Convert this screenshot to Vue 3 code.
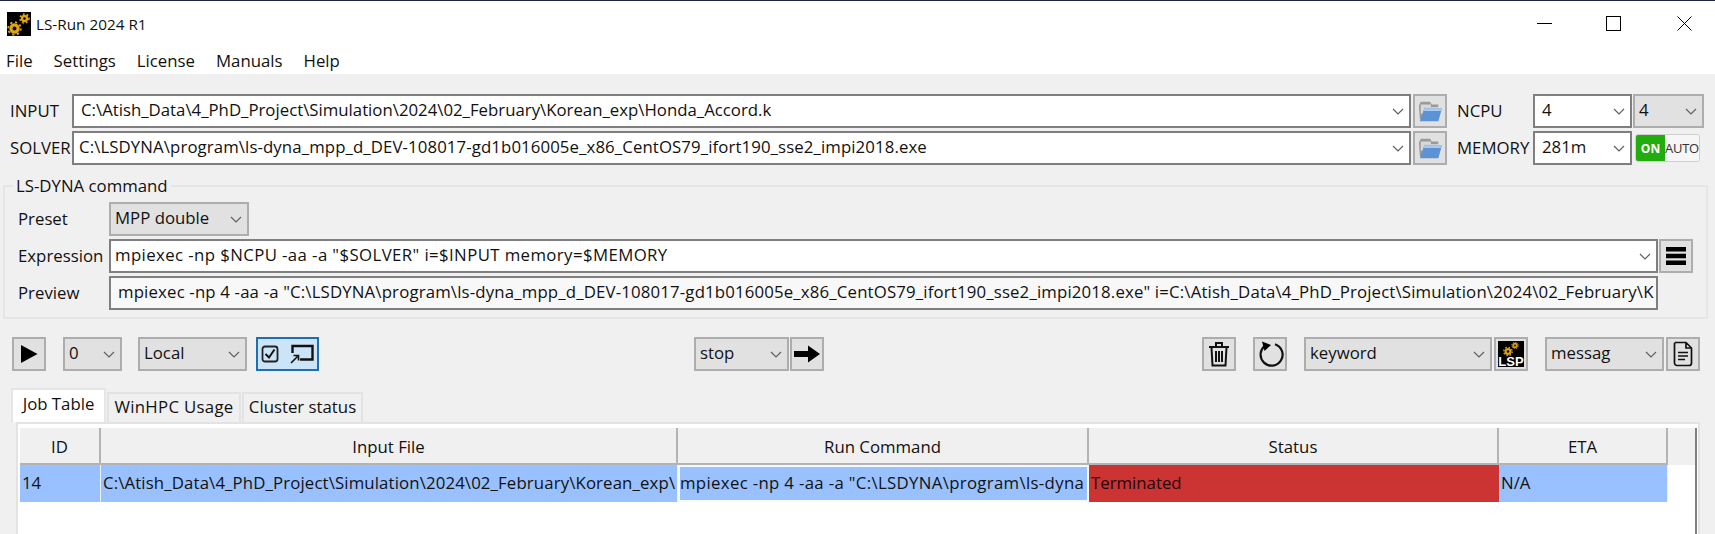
<script setup>
const chev = 'M1 1 L6 6 L11 1'
const cols = [
  { t: 'ID', w: 81 },
  { t: 'Input File', w: 577 },
  { t: 'Run Command', w: 411 },
  { t: 'Status', w: 410 },
  { t: 'ETA', w: 169 }
]
</script>

<template>
  <div class="win">
    <header class="titlebar">
      <svg class="appicon" viewBox="0 0 24 24">
        <rect width="24" height="24" fill="#000" />
        <g fill="none" stroke="#e2a512">
          <circle cx="7.5" cy="16.5" r="3.6" stroke-width="3.2" />
          <circle cx="7.5" cy="16.5" r="6.3" stroke-width="1.8" stroke-dasharray="2.2 2.7" />
          <circle cx="17.5" cy="6.5" r="2.5" stroke-width="2.4" />
          <circle cx="17.5" cy="6.5" r="4.5" stroke-width="1.5" stroke-dasharray="1.8 2" />
        </g>
      </svg>
      <span class="apptitle">LS-Run 2024 R1</span>
      <div class="winbtns">
        <svg viewBox="0 0 15 15"><path d="M0 7.5H15" stroke="#000" fill="none" /></svg>
        <svg viewBox="0 0 15 15"><rect x="0.5" y="0.5" width="14" height="14" stroke="#000" fill="none" /></svg>
        <svg class="closex" viewBox="0 0 15 15"><path d="M0.5 0.5L14.5 14.5M14.5 0.5L0.5 14.5" stroke="#000" fill="none" /></svg>
      </div>
    </header>
    <nav class="menu">
      <span>File</span><span>Settings</span><span>License</span><span>Manuals</span><span>Help</span>
    </nav>

    <main class="body">
      <section class="toprows">
        <div class="row">
          <label class="toplabel">INPUT</label>
          <div class="combo white main"><span class="val">C:\Atish_Data\4_PhD_Project\Simulation\2024\02_February\Korean_exp\Honda_Accord.k</span><svg class="chev" viewBox="0 0 12 7"><path :d="chev" /></svg></div>
          <button class="btn folder"><svg viewBox="0 0 28 26"><path d="M2 7 L4 3 H14 L16 6 H23 V9 H8 L5 22 H3 Z" fill="#9a9a9a" /><path d="M4 6 H15 V9 H8 L6 16 H4Z" fill="#d8d8d8" /><path d="M8 10 H27 L23 24 H3 Z" fill="#5b93d6" /><path d="M8 10 H27 L26 13 H7 Z" fill="#a9c9ee" /></svg></button>
          <label class="rlabel">NCPU</label>
          <div class="combo white ncpu"><span class="val">4</span><svg class="chev" viewBox="0 0 12 7"><path :d="chev" /></svg></div>
          <div class="combo grey ncpu2"><span class="val">4</span><svg class="chev" viewBox="0 0 12 7"><path :d="chev" /></svg></div>
        </div>
        <div class="row">
          <label class="toplabel">SOLVER</label>
          <div class="combo white main tight"><span class="val">C:\LSDYNA\program\ls-dyna_mpp_d_DEV-108017-gd1b016005e_x86_CentOS79_ifort190_sse2_impi2018.exe</span><svg class="chev" viewBox="0 0 12 7"><path :d="chev" /></svg></div>
          <button class="btn folder"><svg viewBox="0 0 28 26"><path d="M2 7 L4 3 H14 L16 6 H23 V9 H8 L5 22 H3 Z" fill="#9a9a9a" /><path d="M4 6 H15 V9 H8 L6 16 H4Z" fill="#d8d8d8" /><path d="M8 10 H27 L23 24 H3 Z" fill="#5b93d6" /><path d="M8 10 H27 L26 13 H7 Z" fill="#a9c9ee" /></svg></button>
          <label class="rlabel">MEMORY</label>
          <div class="combo white ncpu"><span class="val">281m</span><svg class="chev" viewBox="0 0 12 7"><path :d="chev" /></svg></div>
          <div class="toggle"><span class="on">ON</span><span class="auto">AUTO</span></div>
        </div>
      </section>

      <fieldset class="group">
        <legend>LS-DYNA command</legend>
        <div class="grow">
          <label>Preset</label>
          <div class="combo grey preset"><span class="val">MPP double</span><svg class="chev" viewBox="0 0 12 7"><path :d="chev" /></svg></div>
        </div>
        <div class="grow">
          <label>Expression</label>
          <div class="combo white expr narrowpad"><span class="val exprtext">mpiexec -np $NCPU -aa -a "$SOLVER" i=$INPUT memory=$MEMORY</span><svg class="chev" viewBox="0 0 12 7"><path :d="chev" /></svg></div>
          <button class="btn"><svg class="ic" viewBox="0 0 20 20"><path d="M0 1H20V5.5H0ZM0 7.8H20V12.2H0ZM0 14.5H20V19H0Z" /></svg></button>
        </div>
        <div class="grow">
          <label>Preview</label>
          <div class="combo white expr preview"><span class="val previewtext">mpiexec -np 4 -aa -a "C:\LSDYNA\program\ls-dyna_mpp_d_DEV-108017-gd1b016005e_x86_CentOS79_ifort190_sse2_impi2018.exe" i=C:\Atish_Data\4_PhD_Project\Simulation\2024\02_February\K</span></div>
        </div>
      </fieldset>

      <section class="toolbar">
        <div class="tgroup left">
          <button class="btn"><svg class="ic" viewBox="0 0 20 20"><path d="M2 1L18.5 10L2 19Z" /></svg></button>
          <div class="combo grey c0"><span class="val">0</span><svg class="chev" viewBox="0 0 12 7"><path :d="chev" /></svg></div>
          <div class="combo grey local"><span class="val">Local</span><svg class="chev" viewBox="0 0 12 7"><path :d="chev" /></svg></div>
          <button class="btn chk">
            <svg viewBox="0 0 18 18" class="ck"><rect x="1.5" y="1.5" width="15" height="15" rx="2.5" fill="none" stroke="#222" stroke-width="1.8" /><path d="M4.5 9L8 12.5L13.5 4.5" fill="none" stroke="#111" stroke-width="2" /></svg>
            <svg viewBox="0 0 24 20" class="cast"><path d="M2.5 9V2H22.5V15.5H10" fill="none" stroke="#111" stroke-width="2.4" /><path d="M1 19L7.5 12.5M3.5 11.5H8.5V16.5" fill="none" stroke="#111" stroke-width="1.6" /></svg>
          </button>
        </div>
        <div class="tgroup mid">
          <div class="combo grey stop"><span class="val">stop</span><svg class="chev" viewBox="0 0 12 7"><path :d="chev" /></svg></div>
          <button class="btn"><svg class="ic arrow" viewBox="0 0 26 18"><path d="M0 6H14V0.5L26 9L14 17.5V12H0Z" /></svg></button>
        </div>
        <div class="tgroup right">
          <button class="btn"><svg class="ic big" viewBox="0 0 24 26"><g fill="none" stroke="#111" stroke-width="2"><path d="M2 6H22M9 5V2H15V5" /><path d="M4.5 6.5L5.5 24.5H18.5L19.5 6.5" /><path d="M9 10V21M12 10V21M15 10V21" /></g></svg></button>
          <button class="btn refresh"><svg class="ic big2" viewBox="0 0 28 28"><path d="M9.5 5.5A11 11 0 1 0 19 4.2" fill="none" stroke="#111" stroke-width="2.2" /><path d="M6 1.5L15 5L8.5 11Z" /></svg></button>
          <div class="combo grey keyword"><span class="val">keyword</span><svg class="chev" viewBox="0 0 12 7"><path :d="chev" /></svg></div>
          <button class="btn lsp">
            <span class="lspin">
              <svg viewBox="0 0 24 16" class="gears"><g fill="none" stroke="#d9a016"><circle cx="9" cy="10.5" r="2.4" stroke-width="2.2" /><circle cx="9" cy="10.5" r="4.2" stroke-width="1.3" stroke-dasharray="1.6 1.7" /><circle cx="16" cy="4.5" r="1.8" stroke-width="1.8" /><circle cx="16" cy="4.5" r="3.2" stroke-width="1" stroke-dasharray="1.3 1.2" /></g></svg>
              <b>LSP</b>
            </span>
          </button>
          <div class="combo grey messag"><span class="val">messag</span><svg class="chev" viewBox="0 0 12 7"><path :d="chev" /></svg></div>
          <button class="btn doc"><svg class="ic big" viewBox="0 0 22 26"><path d="M3.5 1.5H14L19.5 7V22A2.5 2.5 0 0 1 17 24.5H5A2.5 2.5 0 0 1 2.5 22V2.5ZM14 1.5V7H19.5M6 11.5H16M6 15H16M6 18.5H13" fill="none" stroke="#111" stroke-width="1.7" /></svg></button>
        </div>
      </section>

      <section class="tabs">
        <div class="tab active">Job Table</div>
        <div class="tab t2">WinHPC Usage</div>
        <div class="tab t3">Cluster status</div>
      </section>
      <section class="pane">
        <div class="frame">
          <div class="thead">
            <div v-for="c in cols" :key="c.t" class="th" :style="{ width: c.w + 'px' }">{{ c.t }}</div>
          </div>
          <div class="tr">
            <div class="td blue" :style="{ width: cols[0].w + 'px' }">14</div>
            <div class="td blue inputcell" :style="{ width: cols[1].w + 'px' }">C:\Atish_Data\4_PhD_Project\Simulation\2024\02_February\Korean_exp\</div>
            <div class="td blue cur" :style="{ width: cols[2].w + 'px' }">mpiexec -np 4 -aa -a "C:\LSDYNA\program\ls-dyna</div>
            <div class="td red" :style="{ width: cols[3].w + 'px' }">Terminated</div>
            <div class="td blue" :style="{ width: cols[4].w + 'px' }">N/A</div>
          </div>
        </div>
      </section>
    </main>
  </div>
</template>

<style>
html, body { margin: 0; background: #fff; overflow: hidden; }
</style>

<style scoped>
.win {
  width: 1715px;
  height: 534px;
  overflow: hidden;
  display: flex;
  flex-direction: column;
  font-family: "Open Sans", "Noto Sans", sans-serif;
  font-size: 16.8px;
  color: #111;
  box-sizing: border-box;
  border-top: 1px solid #1d2744;
  background: #fff;
}
.titlebar { height: 47px; display: flex; align-items: center; padding: 0 0 2px 7px; box-sizing: border-box; flex: none; }
.appicon { width: 24px; height: 24px; }
.apptitle { margin-left: 5px; font-size: 15.3px; }
.winbtns { margin-left: auto; display: flex; gap: 54px; padding-right: 23px; }
.winbtns svg { width: 15px; height: 15px; display: block; }
.winbtns .closex { margin-left: 2px; }
.menu { height: 26px; display: flex; align-items: center; gap: 21px; padding: 0 0 2px 6px; box-sizing: border-box; flex: none; }
.body { flex: 1; background: #f0f0f0; padding-top: 20px; display: flex; flex-direction: column; min-height: 0; }
.toprows { display: flex; flex-direction: column; gap: 3px; }
.row { display: flex; align-items: center; height: 34px; }
.row label, .grow label { padding-bottom: 2px; }
.toplabel { width: 62px; padding-left: 10px; flex: none; }
.combo { height: 34px; box-sizing: border-box; border: 2px solid #a0a0a0; display: flex; align-items: center; padding: 0 5px 0 7px; flex: none; overflow: hidden; white-space: nowrap; }
.white { background: #fff; border-color: #7f7f7f; }
.grey { background: #e1e1e1; border-color: #adadad; padding-left: 4px; }
.val { flex: 1; padding-bottom: 3px; }
.chev { width: 12px; height: 7px; flex: none; margin-left: 6px; }
.chev path { fill: none; stroke: #5f5f5f; stroke-width: 1.2; }
.main { width: 1339px; }
.tight { padding-left: 5px; letter-spacing: 0.1px; }
.narrowpad { padding-left: 4px; }
.exprtext { letter-spacing: 0.4px; }
.previewtext { letter-spacing: 0.16px; }
.btn { width: 34px; height: 34px; box-sizing: border-box; padding: 0; border: 2px solid #adadad; background: #e1e1e1; display: flex; align-items: center; justify-content: center; flex: none; }
.folder { margin-left: 2px; }
.folder svg { width: 26px; height: 24px; }
.rlabel { margin-left: 10px; width: 76px; flex: none; white-space: nowrap; }
.ncpu { width: 99px; }
.ncpu2 { width: 71px; margin-left: 1px; }
.toggle { margin-left: 3px; width: 65px; height: 28px; display: flex; border: 1px solid #d0d0d0; border-radius: 3px; box-sizing: border-box; overflow: hidden; font-size: 13px; flex: none; }
.on { width: 29px; background: #22ac0e; color: #fff; font-weight: 700; font-size: 12px; display: flex; align-items: center; justify-content: center; }
.auto { flex: 1; background: #f6f6f6; color: #333; display: flex; align-items: center; justify-content: center; letter-spacing: -0.3px; }

.group { margin: 12px 7px 0 3px; padding: 7px 0 0 13px; border: 2px solid #e6e6e6; min-width: 0; height: 142px; box-sizing: border-box; display: flex; flex-direction: column; gap: 3px; }
.group legend { padding: 0 3px; margin-left: -5px; line-height: 18px; }
.grow { display: flex; align-items: center; height: 34px; flex: none; }
.grow label { width: 91px; flex: none; }
.preset { width: 140px; }
.expr { width: 1549px; }
.preview { background: #f8f8f8; }
.grow .btn { margin-left: 1px; }
.ic { width: 20px; height: 20px; fill: #000; }
.arrow { width: 26px; height: 18px; }
.big { width: 24px; height: 26px; }
.big2 { width: 28px; height: 28px; }

.toolbar { display: flex; height: 34px; margin-top: 18px; flex: none; }
.tgroup { display: flex; align-items: center; }
.left { padding-left: 12px; width: 694px; box-sizing: border-box; flex: none; }
.left .c0 { margin-left: 17px; width: 59px; }
.left .local { margin-left: 16px; width: 109px; }
.chk { margin-left: 9px; width: 63px; background: #cce4f7; border-color: #1c6fb5; gap: 11px; }
.ck { width: 18px; height: 18px; }
.cast { width: 24px; height: 20px; }
.stop { width: 95px; }
.mid .btn { margin-left: 1px; }
.mid { width: 508px; flex: none; }
.right .refresh { margin-left: 17px; }
.keyword { width: 188px; margin-left: 17px; }
.lsp { margin-left: 2px; }
.lspin { width: 26px; height: 26px; background: #000; position: relative; display: block; overflow: hidden; }
.gears { position: absolute; left: 1px; top: 0; width: 24px; height: 16px; }
.lspin b { position: absolute; left: 0; right: 0; bottom: -1px; color: #fff; font: 700 13px/13px "Liberation Sans", sans-serif; text-align: center; }
.messag { width: 119px; margin-left: 17px; }
.doc { margin-left: 2px; }

.tabs { display: flex; align-items: flex-end; height: 34px; margin-top: 17px; padding-left: 11px; flex: none; }
.tab { height: 30px; display: flex; align-items: center; justify-content: center; background: #f0f0f0; border: 2px solid #e3e3e3; border-bottom: none; box-sizing: border-box; white-space: nowrap; padding-bottom: 4px; }
.active { height: 34px; background: #fff; width: 95px; border-color: #e6e6e6; padding-bottom: 6px; }
.t2 { width: 134px; margin-left: 1px; letter-spacing: 0.3px; }
.t3 { width: 121px; margin-left: 1px; }
.pane { margin-left: 16px; width: 1684px; flex: 1; box-sizing: border-box; border: 2px solid #e3e3e3; border-bottom: none; background: #fff; padding: 4px 0 0 2px; min-height: 0; }
.frame { width: 1677px; height: 100%; box-sizing: border-box; border-right: 2px solid #808080; }
.thead { display: flex; height: 37px; background: #f0f0f0; }
.th { box-sizing: border-box; border-right: 2px solid #b4b4b4; border-bottom: 2px solid #b4b4b4; display: flex; align-items: center; justify-content: center; padding-top: 1px; }
.tr { display: flex; height: 37px; }
.td { box-sizing: border-box; padding: 0 2px 2px; display: flex; align-items: center; white-space: nowrap; overflow: hidden; }
.inputcell { letter-spacing: 0.13px; }
.blue { background: #99c1ff; border-right: 1px solid #eaf2ff; }
.cur { border: 2px solid #f4f8ff; padding: 0 0 2px; letter-spacing: 0.33px; }
.red { background: #cc3333; color: #220808; }
</style>
